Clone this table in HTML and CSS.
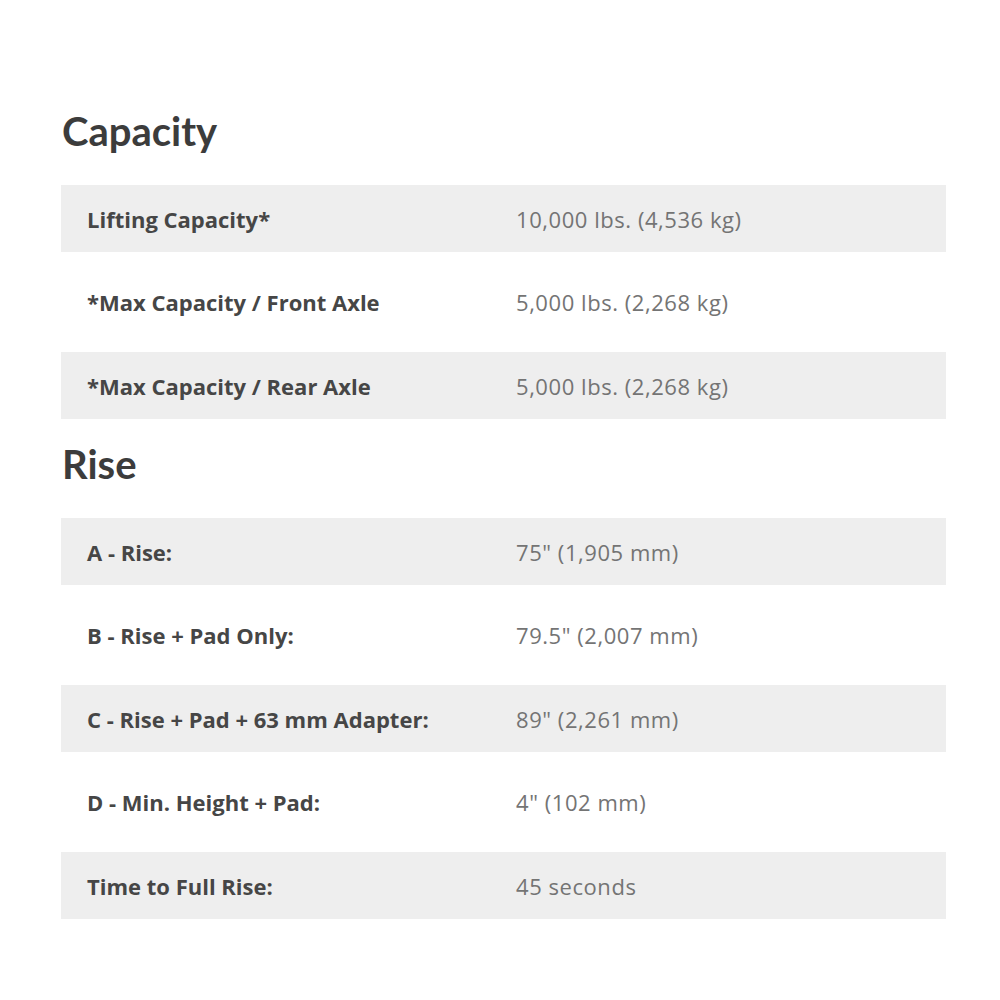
FILE: index.html
```html
<!DOCTYPE html>
<html>
<head>
<meta charset="utf-8">
<link rel="stylesheet" href="styles.css">
</head>
<body>
<main class="page">
  <section class="spec">
    <h2 class="spec-title">Capacity</h2>
    <div class="spec-table">
      <div class="row shade"><div class="label">Lifting Capacity*</div><div class="value">10,000 lbs. (4,536 kg)</div></div>
      <div class="row"><div class="label">*Max Capacity / Front Axle</div><div class="value">5,000 lbs. (2,268 kg)</div></div>
      <div class="row shade"><div class="label">*Max Capacity / Rear Axle</div><div class="value">5,000 lbs. (2,268 kg)</div></div>
    </div>
  </section>
  <section class="spec">
    <h2 class="spec-title rise">Rise</h2>
    <div class="spec-table">
      <div class="row shade"><div class="label">A - Rise:</div><div class="value">75" (1,905 mm)</div></div>
      <div class="row"><div class="label">B - Rise + Pad Only:</div><div class="value">79.5" (2,007 mm)</div></div>
      <div class="row shade"><div class="label">C - Rise + Pad + 63 mm Adapter:</div><div class="value">89" (2,261 mm)</div></div>
      <div class="row"><div class="label">D - Min. Height + Pad:</div><div class="value">4" (102 mm)</div></div>
      <div class="row shade"><div class="label">Time to Full Rise:</div><div class="value">45 seconds</div></div>
    </div>
  </section>
</main>
</body>
</html>
```
FILE: styles.css
```css
html, body {
  margin: 0;
  padding: 0;
  background: #ffffff;
}
body {
  font-family: "Open Sans", Lato, sans-serif;
}
.page {
  width: 885px;
  padding: 104px 0 0 61px;
}
.spec-title {
  margin: 0;
  height: 81px;
  font-family: Lato, sans-serif;
  font-size: 40px;
  line-height: 54px;
  font-weight: 700;
  color: #3c3c3c;
  padding-left: 1px;
}
.spec-title.rise {
  height: 99px;
  padding-top: 18px;
  box-sizing: border-box;
}
.spec-table {
  display: flex;
  flex-direction: column;
  gap: 16.5px;
}
.row {
  display: grid;
  grid-template-columns: 429px 1fr;
  height: 67px;
  align-items: center;
}
.row.shade {
  background: #eeeeee;
}
.label {
  padding-left: 26px;
  font-size: 22px;
  font-weight: 700;
  color: #464646;
  letter-spacing: 0;
}
.value {
  padding-left: 26px;
  font-size: 22px;
  font-weight: 400;
  color: #747474;
  letter-spacing: 0.55px;
}
```
